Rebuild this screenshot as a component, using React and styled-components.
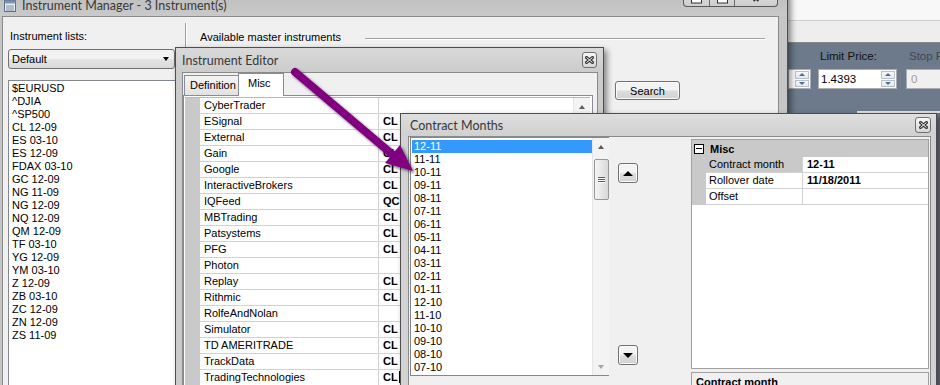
import React from 'react'
import styled, { createGlobalStyle } from 'styled-components'

const GlobalStyle = createGlobalStyle`
	html, body {
		margin: 0;
		padding: 0;
		background: #6d7a8a;
	}
	body {
		font-family: "Liberation Sans", Arial, sans-serif;
		font-size: 11px;
		color: #000;
	}
`

const Desktop = styled.div`
	position: relative;
	width: 940px;
	height: 385px;
	overflow: hidden;
	background: #6d7a8a;
`

// ---- window chrome ----

const Win = styled.div`
	position: absolute;
	left: ${p => p.$x}px;
	top: ${p => p.$y}px;
	width: ${p => p.$w}px;
	height: ${p => p.$h}px;
	box-sizing: border-box;
	display: flex;
	flex-direction: column;
	background: ${p => p.$frame};
	border: 1px solid #4e4e4e;
	box-shadow: 3px 3px 6px rgba(0, 0, 0, 0.45);
`

const TitleBar = styled.div`
	flex: none;
	position: relative;
	box-sizing: border-box;
	height: ${p => p.$h}px;
	display: flex;
	align-items: center;
	gap: 6px;
	padding: ${p => p.$pt || 0}px ${p => p.$pr || 0}px 0 ${p => p.$pl}px;
	background: ${p => p.$bg};
`

const Caption = styled.span`
	flex: 1;
	font-family: Lato, "Noto Sans", sans-serif;
	font-size: 12.5px;
	color: #383838;
	white-space: nowrap;
`

const CloseBox = styled.div`
	flex: none;
	width: ${p => p.$w}px;
	height: 16px;
	box-sizing: border-box;
	border: 1px solid #6f6f6f;
	border-radius: 3px;
	background: linear-gradient(#f7f7f7, #d6d6d6);
	display: flex;
	align-items: center;
	justify-content: center;
`

const CaptionButtons = styled.div`
	position: absolute;
	right: 9px;
	top: 0;
	height: 16px;
	display: flex;
	box-sizing: border-box;
	border: 1px solid #5a5a5a;
	border-top: none;
	border-radius: 0 0 4px 4px;
	overflow: hidden;
	background: linear-gradient(#e2e2e2, #cdcdcd);
`

const CapBtn = styled.div`
	width: ${p => p.$w}px;
	display: flex;
	align-items: flex-end;
	justify-content: center;
	padding-bottom: 2px;
	box-sizing: border-box;
	border-left: ${p => (p.$first ? 'none' : '1px solid #6a6a6a')};
`

const Client = styled.div`
	flex: 1;
	min-height: 0;
	display: flex;
	flex-direction: ${p => p.$dir || 'row'};
	margin: 0 ${p => p.$mr}px 0 ${p => p.$ml}px;
	border: 1px solid #8a8a8a;
	border-bottom: none;
	background: #f0f0f0;
`

const XGlyph = () => (
	<svg width="9" height="8" viewBox="0 0 9 8">
		<path d="M1.5 1.5 L7.5 6.5 M7.5 1.5 L1.5 6.5" stroke="#3a3a3a" strokeWidth="3" strokeLinecap="square" />
		<path d="M1.5 1.5 L7.5 6.5 M7.5 1.5 L1.5 6.5" stroke="#f4f4f4" strokeWidth="1" />
	</svg>
)

// ---- common controls ----

const Label = styled.div`
	height: 14px;
	line-height: 14px;
	margin-top: ${p => p.$mt || 0}px;
	color: ${p => p.$color || '#000'};
	padding-left: ${p => p.$pl || 0}px;
	white-space: nowrap;
`

const Button3D = styled.div`
	flex: none;
	box-sizing: border-box;
	width: ${p => p.$w}px;
	height: ${p => p.$h}px;
	margin-left: ${p => p.$ml || 0}px;
	margin-top: ${p => p.$mt || 0}px;
	border: 1px solid #707070;
	border-radius: 3px;
	background: linear-gradient(#f3f3f3 45%, #dcdcdc 55%, #d2d2d2);
	box-shadow: inset 0 0 0 1px #fbfbfb;
	display: flex;
	align-items: center;
	justify-content: center;
	color: #000;
`

const Tri = styled.span`
	width: 0;
	height: 0;
	border-left: ${p => p.$s}px solid transparent;
	border-right: ${p => p.$s}px solid transparent;
	${p => (p.$up ? 'border-bottom' : 'border-top')}: ${p => p.$h}px solid ${p => p.$c};
`

const ListBox = styled.div`
	flex: ${p => (p.$grow ? 1 : 'none')};
	box-sizing: border-box;
	width: ${p => p.$w}px;
	height: ${p => (p.$h ? `${p.$h}px` : 'auto')};
	margin-top: ${p => p.$mt || 0}px;
	border: 1px solid #828790;
	background: #fff;
	display: flex;
`

const Items = styled.div`
	flex: none;
	width: ${p => (p.$w ? `${p.$w}px` : 'auto')};
	padding: ${p => p.$pt}px 0 0 ${p => p.$pl}px;
	display: flex;
	flex-direction: column;
`

const ListItem = styled.div`
	height: 13px;
	line-height: 13px;
	padding-left: ${p => p.$indent}px;
	white-space: nowrap;
	background: ${p => (p.$selected ? '#3399ff' : 'transparent')};
	color: ${p => (p.$selected ? '#fff' : '#000')};
`

const VScroll = styled.div`
	flex: none;
	width: 17px;
	margin-left: auto;
	box-sizing: border-box;
	border-left: 1px solid #e6e6e6;
	background: #f3f3f3;
	display: flex;
	flex-direction: column;
	align-items: center;
`

const ArrowCell = styled.div`
	flex: none;
	height: 17px;
	display: flex;
	align-items: center;
	justify-content: center;
	margin-top: ${p => (p.$bottom ? 'auto' : '0')};
`

const Thumb = styled.div`
	width: 15px;
	height: 41px;
	margin-top: 4px;
	box-sizing: border-box;
	border: 1px solid #979797;
	border-radius: 2px;
	background: linear-gradient(90deg, #f5f5f5, #e4e4e4 60%, #d8d8d8);
	display: flex;
	flex-direction: column;
	align-items: center;
	justify-content: center;
	gap: 1px;
`

const Grip = styled.span`
	width: 7px;
	height: 1px;
	background: #5c5c5c;
	box-shadow: 0 1px 0 #fff;
`

// ---- Instrument Manager ----

const LeftPane = styled.div`
	flex: none;
	width: 182px;
	padding-left: 5px;
	box-sizing: border-box;
	display: flex;
	flex-direction: column;
`

const Combo = styled.div`
	flex: none;
	box-sizing: border-box;
	width: 167px;
	height: 20px;
	margin-top: 6px;
	padding: 0 5px 0 3px;
	border: 1px solid #707070;
	border-radius: 3px;
	background: linear-gradient(#f2f2f2 50%, #e3e3e3 50%, #dadada);
	display: flex;
	align-items: center;
	justify-content: space-between;
`

const Splitter = styled.div`
	flex: none;
	width: 0;
	margin-top: 6px;
	border-left: 1px solid #a0a0a0;
	border-right: 1px solid #fff;
`

const RightPane = styled.div`
	flex: 1;
	padding-left: 13px;
	display: flex;
	flex-direction: column;
`

const GroupHeader = styled.div`
	display: flex;
	align-items: center;
	margin-top: 13px;
	height: 14px;
`

const Rule = styled.div`
	flex: none;
	width: 400px;
	margin: 3px 0 0 24px;
	border-top: 1px solid #a0a0a0;
	border-bottom: 1px solid #fff;
`

const AppIcon = () => (
	<svg width="12" height="12" viewBox="0 0 12 12">
		<rect x="0.5" y="0.5" width="11" height="11" fill="#e8eef6" stroke="#5a6f8c" />
		<rect x="0.5" y="0.5" width="11" height="3" fill="#7d92b0" />
		<path d="M2 6h8M2 8h8M2 10h8" stroke="#7d8aa0" />
	</svg>
)

// ---- back window (order panel) ----

const BackWin = styled.div`
	position: absolute;
	left: 788px;
	top: 0;
	width: 152px;
	height: 113px;
	display: flex;
	flex-direction: column;
	background: #6c7a8b;
`

const Strip = styled.div`
	flex: none;
	height: ${p => p.$h}px;
	background: ${p => p.$bg};
	border-bottom: 1px solid ${p => p.$line};
`

const Slate = styled.div`
	flex: 1;
	display: flex;
	flex-direction: column;
	padding-top: 7px;
`

const FieldRow = styled.div`
	display: flex;
`

const Field = styled.div`
	flex: none;
	width: ${p => p.$w}px;
	margin-left: ${p => p.$ml || 0}px;
	display: flex;
	flex-direction: column;
	font-size: 11.5px;
`

const FieldLabel = styled.div`
	height: 13px;
	line-height: 13px;
	padding-left: ${p => p.$pl || 0}px;
	color: ${p => p.$color};
	white-space: nowrap;
`

const TextBox = styled.div`
	margin-top: 6px;
	height: 20px;
	box-sizing: border-box;
	border: 1px solid #abadb3;
	background: ${p => (p.$disabled ? '#f0f0f0' : '#fff')};
	color: ${p => (p.$disabled ? '#a89c8c' : '#000')};
	display: flex;
	align-items: center;
	padding-left: ${p => p.$pl}px;
`

const Spin = styled.div`
	margin-left: auto;
	margin-right: 1px;
	width: 14px;
	height: 16px;
	display: flex;
	flex-direction: column;
	gap: 1px;
`

const SpinBtn = styled.div`
	flex: 1;
	border: 1px solid #b8c0cc;
	background: linear-gradient(#f8f9fb, #e4e8ee);
	display: flex;
	align-items: center;
	justify-content: center;
`

const Ledge = styled.div`
	margin-top: auto;
	margin-left: 69px;
	height: 2px;
	background: #e0e0e0;
`

// ---- Instrument Editor ----

const TabStrip = styled.div`
	flex: none;
	height: 22px;
	padding-left: 1px;
	display: flex;
	align-items: flex-end;
	position: relative;
	z-index: 1;
`

const Tab = styled.div`
	box-sizing: border-box;
	width: ${p => p.$w}px;
	height: ${p => (p.$active ? 23 : 20)}px;
	margin-left: ${p => (p.$active ? -1 : 0)}px;
	margin-bottom: ${p => (p.$active ? -1 : 0)}px;
	padding: 3px 0 0 ${p => p.$pl}px;
	border: 1px solid #898c95;
	border-bottom: none;
	background: ${p => (p.$active ? '#fff' : 'linear-gradient(#f4f4f4, #e2e2e2)')};
	white-space: nowrap;
`

const TabPanel = styled.div`
	flex: 1;
	min-height: 0;
	margin-right: 4px;
	padding: 1px 2px 0 1px;
	border: 1px solid #898c95;
	border-bottom: none;
	background: #fff;
	display: flex;
	flex-direction: column;
`

const PGrid = styled.div`
	flex: 1;
	min-height: 0;
	display: flex;
	border-top: 1px solid #b8b8b8;
`

const PRows = styled.div`
	flex: 1;
	display: flex;
	flex-direction: column;
`

const PRow = styled.div`
	flex: none;
	display: grid;
	grid-template-columns: ${p => p.$cols};
	height: 16px;
`

const MarginCell = styled.div`
	background: #c9c9c9;
`

const NameCell = styled.div`
	box-sizing: border-box;
	padding-left: ${p => p.$pl}px;
	line-height: 15px;
	white-space: nowrap;
	overflow: hidden;
	border-bottom: 1px solid #d2d2d2;
	border-right: 1px solid #d2d2d2;
	background: ${p => (p.$selected ? '#c9c9c9' : '#fff')};
`

const ValueCell = styled.div`
	box-sizing: border-box;
	padding-left: ${p => p.$pl}px;
	line-height: 15px;
	font-weight: bold;
	white-space: nowrap;
	overflow: hidden;
	border-bottom: 1px solid #d2d2d2;
	background: #fff;
`

const Caret = styled.span`
	display: inline-block;
	width: 1px;
	height: 12px;
	margin-left: 1px;
	vertical-align: -2px;
	background: #000;
`

// ---- Contract Months ----

const CmBody = styled.div`
	flex: 1;
	display: flex;
	align-items: flex-start;
	padding-left: 1px;
`

const ButtonCol = styled.div`
	flex: none;
	display: flex;
	flex-direction: column;
	gap: 162px;
	margin-left: 9px;
	padding-top: 26px;
`

const PropCol = styled.div`
	flex: none;
	width: 238px;
	margin-left: 53px;
	display: flex;
	flex-direction: column;
`

const MiniGrid = styled.div`
	box-sizing: border-box;
	height: 230px;
	margin-top: 2px;
	border: 1px solid #a0a0a0;
	background: #fff;
	display: flex;
	flex-direction: column;
`

const Category = styled.div`
	flex: none;
	height: 17px;
	display: flex;
	align-items: center;
	gap: 6px;
	padding-left: 2px;
	background: #c9c9c9;
	font-weight: bold;
`

const Collapse = styled.span`
	box-sizing: border-box;
	width: 10px;
	height: 10px;
	border: 1px solid #000;
	background: #fff;
	display: flex;
	align-items: center;
	justify-content: center;
	&::after {
		content: '';
		width: 6px;
		height: 1px;
		background: #000;
	}
`

const HelpPane = styled.div`
	box-sizing: border-box;
	height: 40px;
	margin-top: 3px;
	padding: 3px 0 0 4px;
	border: 1px solid #a0a0a0;
	background: #f0f0f0;
	font-weight: bold;
`

const ArrowLayer = styled.svg`
	position: absolute;
	left: 0;
	top: 0;
	pointer-events: none;
`

const instruments = ['$EURUSD', '^DJIA', '^SP500', 'CL 12-09', 'ES 03-10', 'ES 12-09', 'FDAX 03-10', 'GC 12-09', 'NG 11-09', 'NG 12-09', 'NQ 12-09', 'QM 12-09', 'TF 03-10', 'YG 12-09', 'YM 03-10', 'Z 12-09', 'ZB 03-10', 'ZC 12-09', 'ZN 12-09', 'ZS 11-09']

const providers = [
	['CyberTrader', ''], ['ESignal', 'CL'], ['External', 'CL'], ['Gain', 'CL'],
	['Google', 'CL'], ['InteractiveBrokers', 'CL'], ['IQFeed', 'QCL'], ['MBTrading', 'CL'],
	['Patsystems', 'CL'], ['PFG', 'CL'], ['Photon', ''], ['Replay', 'CL'],
	['Rithmic', 'CL'], ['RolfeAndNolan', ''], ['Simulator', 'CL'], ['TD AMERITRADE', 'CL'],
	['TrackData', 'CL'], ['TradingTechnologies', 'CL', true],
]

const months = ['12-11', '11-11', '10-11', '09-11', '08-11', '07-11', '06-11', '05-11', '04-11', '03-11', '02-11', '01-11', '12-10', '11-10', '10-10', '09-10', '08-10', '07-10']

const monthProps = [
	['Contract month', '12-11', true],
	['Rollover date', '11/18/2011'],
	['Offset', ''],
]

const SpinPair = () => (
	<Spin>
		<SpinBtn><Tri $up $s={3} $h={3} $c="#4d6a9c" /></SpinBtn>
		<SpinBtn><Tri $s={3} $h={3} $c="#4d6a9c" /></SpinBtn>
	</Spin>
)

export default function App() {
	return (
		<Desktop>
			<GlobalStyle />

			<BackWin>
				<Strip $h={20} $bg="#f8f8f8" $line="#cfcfcf" />
				<Strip $h={21} $bg="#eeeeee" $line="#8a8a8a" />
				<Slate>
					<FieldRow>
						<Field $w={23}>
							<FieldLabel />
							<TextBox $pl={0}><SpinPair /></TextBox>
						</Field>
						<Field $w={79} $ml={7}>
							<FieldLabel $pl={2} $color="#111">Limit Price:</FieldLabel>
							<TextBox $pl={2}>1.4393<SpinPair /></TextBox>
						</Field>
						<Field $w={44} $ml={9}>
							<FieldLabel $pl={3} $color="#3f4853">Stop P</FieldLabel>
							<TextBox $pl={4} $disabled>0</TextBox>
						</Field>
					</FieldRow>
					<Ledge />
				</Slate>
			</BackWin>

			<Win $x={-1} $y={-10} $w={789} $h={420} $frame="#c6c6c6">
				<TitleBar $h={25} $pt={4} $pl={4} $bg="linear-gradient(#bdbdbd, #c9c9c9)">
					<AppIcon />
					<Caption>Instrument Manager - 3 Instrument(s)</Caption>
					<CaptionButtons>
						<CapBtn $w={25} $first>
							<svg width="11" height="6" viewBox="0 0 11 6"><rect x="0.5" y="-2" width="10" height="7" fill="#fff" stroke="#333" /></svg>
						</CapBtn>
						<CapBtn $w={25}>
							<svg width="11" height="6" viewBox="0 0 11 6"><rect x="0.5" y="-2" width="10" height="7" fill="#fff" stroke="#333" /><path d="M2.5 1.5h6" stroke="#333" /></svg>
						</CapBtn>
						<CapBtn $w={43}>
							<svg width="12" height="5" viewBox="0 0 12 5"><path d="M2 -2 L5 2 M10 -2 L7 2" stroke="#333" strokeWidth="2.2" /></svg>
						</CapBtn>
					</CaptionButtons>
				</TitleBar>
				<Client $ml={2} $mr={8}>
					<LeftPane>
						<Label $mt={12} $pl={2}>Instrument lists:</Label>
						<Combo>
							<span>Default</span>
							<Tri $s={3.5} $h={4} $c="#000" />
						</Combo>
						<ListBox $w={168} $mt={11} $grow>
							<Items $pt={1} $pl={0}>
								{instruments.map(name => (
									<ListItem key={name} $indent={3}>{name}</ListItem>
								))}
							</Items>
						</ListBox>
					</LeftPane>
					<Splitter />
					<RightPane>
						<GroupHeader>
							<span>Available master instruments</span>
							<Rule />
						</GroupHeader>
						<Button3D $w={65} $h={19} $ml={415} $mt={37}>Search</Button3D>
					</RightPane>
				</Client>
			</Win>

			<Win $x={175} $y={47} $w={429} $h={360} $frame="#cbcbcb">
				<TitleBar $h={24} $pl={6} $pr={6} $bg="linear-gradient(#d9d9d9, #cccccc)">
					<Caption>Instrument Editor</Caption>
					<CloseBox $w={15}><XGlyph /></CloseBox>
				</TitleBar>
				<Client $ml={6} $mr={5} $dir="column">
					<TabStrip>
						<Tab $w={55} $pl={5}>Definition</Tab>
						<Tab $w={46} $pl={9} $active>Misc</Tab>
					</TabStrip>
					<TabPanel>
						<PGrid>
							<PRows>
								{providers.map(([name, value, editing]) => (
									<PRow key={name} $cols="15px 179px 1fr">
										<MarginCell />
										<NameCell $pl={4}>{name}</NameCell>
										<ValueCell $pl={4}>{value}{editing && <Caret />}</ValueCell>
									</PRow>
								))}
							</PRows>
							<VScroll>
								<ArrowCell><Tri $up $s={3.5} $h={4} $c="#606060" /></ArrowCell>
							</VScroll>
						</PGrid>
					</TabPanel>
				</Client>
			</Win>

			<Win $x={400} $y={113} $w={537} $h={290} $frame="#d2d2d2">
				<TitleBar $h={22} $pl={9} $pr={5} $bg="linear-gradient(#dedede, #d0d0d0)">
					<Caption>Contract Months</Caption>
					<CloseBox $w={16}><XGlyph /></CloseBox>
				</TitleBar>
				<Client $ml={7} $mr={5}>
					<CmBody>
						<ListBox $w={199} $h={239}>
							<Items $w={180} $pt={2} $pl={1}>
								{months.map((m, i) => (
									<ListItem key={m} $indent={2} $selected={i === 0}>{m}</ListItem>
								))}
							</Items>
							<VScroll>
								<ArrowCell><Tri $up $s={3.5} $h={4} $c="#5a5a5a" /></ArrowCell>
								<Thumb><Grip /><Grip /><Grip /></Thumb>
								<ArrowCell $bottom><Tri $s={3.5} $h={4} $c="#a6a6a6" /></ArrowCell>
							</VScroll>
						</ListBox>
						<ButtonCol>
							<Button3D $w={20} $h={20}><Tri $up $s={5} $h={5} $c="#000" /></Button3D>
							<Button3D $w={20} $h={20}><Tri $s={5} $h={5} $c="#000" /></Button3D>
						</ButtonCol>
						<PropCol>
							<MiniGrid>
								<Category><Collapse />Misc</Category>
								{monthProps.map(([name, value, selected]) => (
									<PRow key={name} $cols="14px 97px 1fr">
										<MarginCell />
										<NameCell $pl={3} $selected={selected}>{name}</NameCell>
										<ValueCell $pl={4}>{value}</ValueCell>
									</PRow>
								))}
							</MiniGrid>
							<HelpPane>Contract month</HelpPane>
						</PropCol>
					</CmBody>
				</Client>
			</Win>

			<ArrowLayer width="940" height="385" viewBox="0 0 940 385">
				<defs>
					<filter id="arrowShadow" x="-20%" y="-20%" width="140%" height="140%">
						<feDropShadow dx="2" dy="2" stdDeviation="1.6" floodColor="#000" floodOpacity="0.55" />
					</filter>
				</defs>
				<g filter="url(#arrowShadow)">
					<line x1="295" y1="72" x2="393" y2="155" stroke="#800080" strokeWidth="8" strokeLinecap="round" />
					<polygon points="413,171 385,163 400,145" fill="#800080" />
				</g>
			</ArrowLayer>
		</Desktop>
	)
}
